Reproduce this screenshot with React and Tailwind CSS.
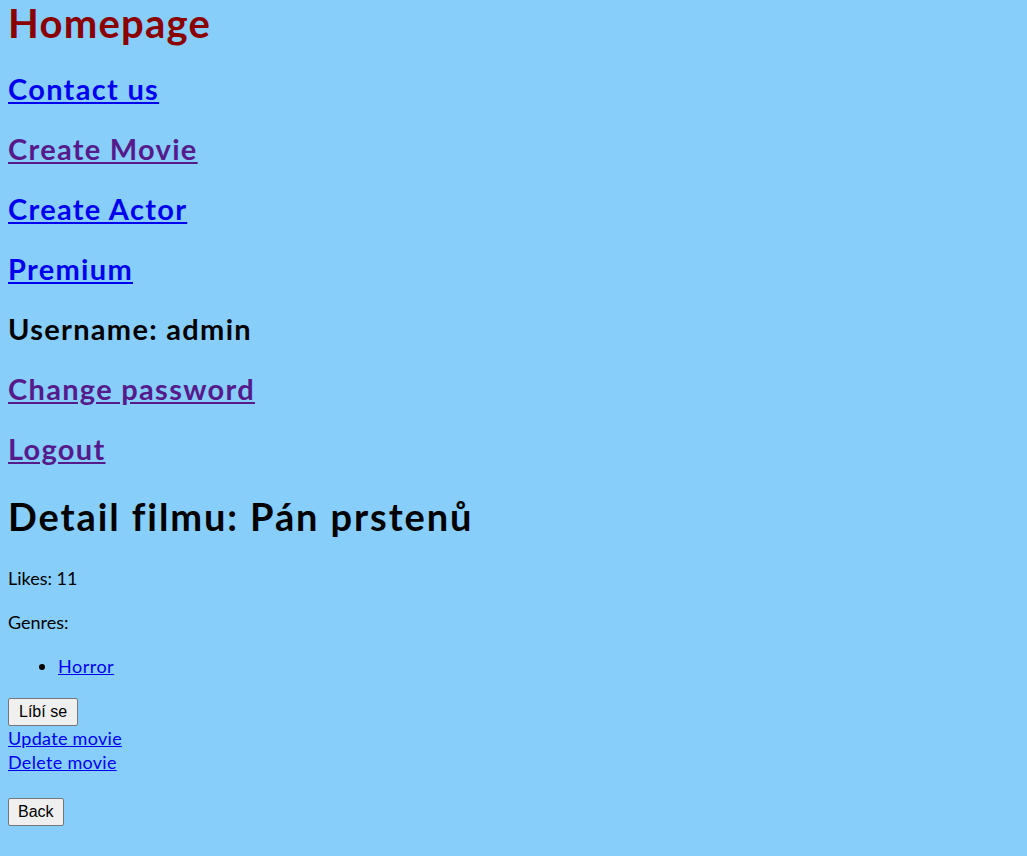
import React from "react";

export default function App() {
  const nav = [
    { label: "Contact us", visited: false },
    { label: "Create Movie", visited: true },
    { label: "Create Actor", visited: false },
    { label: "Premium", visited: false },
    { label: "Username: admin", plain: true },
    { label: "Change password", visited: true },
    { label: "Logout", visited: true },
  ];

  return (
    <div
      className="min-h-screen w-full bg-[#87cefa] px-2 text-black"
      style={{ fontFamily: "Lato, 'Open Sans', sans-serif" }}
    >
      {/* Header */}
      <h1 className="text-[40px] font-bold leading-[46px] tracking-[1.25px] text-[#8b0000]">
        Homepage
      </h1>

      <div className="mt-[13px] flex flex-col">
        {nav.map((item) =>
          item.plain ? (
            <h2
              key={item.label}
              className="text-[29px] font-bold leading-[60px] tracking-[1.3px]"
            >
              {item.label}
            </h2>
          ) : (
            <h2
              key={item.label}
              className="text-[29px] font-bold leading-[60px] tracking-[1.3px]"
            >
              <a
                href="#"
                className={
                  item.visited
                    ? "text-[#551a8b] underline"
                    : "text-[#0000ee] underline"
                }
              >
                {item.label}
              </a>
            </h2>
          )
        )}
      </div>

      {/* Movie detail */}
      <h1 className="mt-[15px] text-[38px] font-bold leading-[44px] tracking-[1.9px]">
        Detail filmu: Pán prstenů
      </h1>

      <p className="mt-[28px] text-[18px] leading-[24px]">Likes: 11</p>
      <p className="mt-[20px] text-[18px] leading-[24px]">Genres:</p>
      <ul className="mt-[20px] list-disc pl-[50px] text-[18px] leading-[24px]">
        <li>
          <a href="#" className="text-[#0000ee] underline tracking-[0.5px]">
            Horror
          </a>
        </li>
      </ul>

      <button
        className="mt-[20px] block h-[28px] rounded-[2px] border border-[#767676] bg-[#efefef] px-[10px] text-[16px] leading-[20px]"
        style={{ fontFamily: "'Liberation Sans', Arial, sans-serif" }}
      >
        Líbí se
      </button>
      <div className="flex flex-col text-[18px] leading-[24px]">
        <a href="#" className="self-start text-[#0000ee] underline tracking-[0.3px]">
          Update movie
        </a>
        <a href="#" className="self-start text-[#0000ee] underline tracking-[0.3px]">
          Delete movie
        </a>
      </div>
      <button
        className="mt-[24px] block h-[28px] rounded-[2px] border border-[#767676] bg-[#efefef] px-[9px] text-[16px] leading-[20px]"
        style={{ fontFamily: "'Liberation Sans', Arial, sans-serif" }}
      >
        Back
      </button>
    </div>
  );
}
